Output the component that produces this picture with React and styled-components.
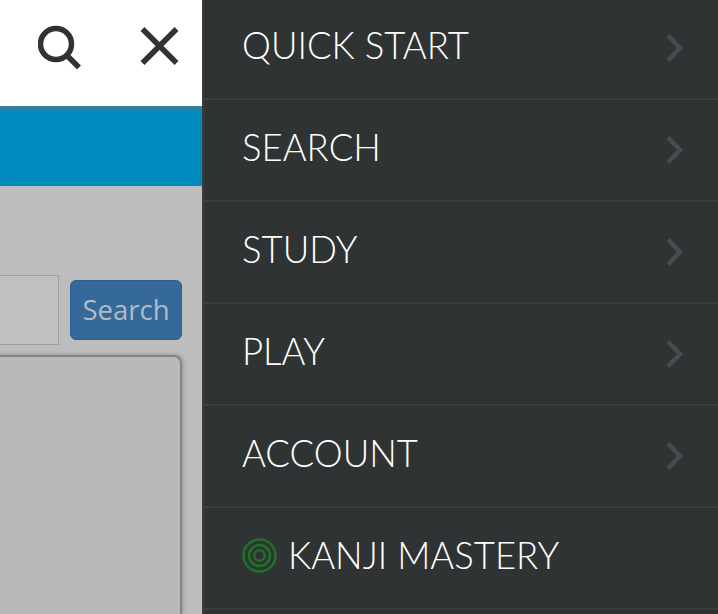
import React from "react";
import styled, { createGlobalStyle } from "styled-components";

const Global = createGlobalStyle`
  html, body { margin: 0; padding: 0; }
  body { width: 718px; height: 614px; overflow: hidden; background: #bdbdbd; }
`;

const MENU = ["QUICK START", "SEARCH", "STUDY", "PLAY", "ACCOUNT"];

const Page = styled.div`
  display: flex;
  width: 718px;
  height: 614px;
  overflow: hidden;
`;

const Side = styled.div`
  width: 202px;
  flex: none;
  display: flex;
  flex-direction: column;
  overflow: hidden;
`;

const TopBar = styled.div`
  height: 106px;
  background: #fff;
  display: flex;
  align-items: flex-start;
  padding: 25px 22px 0 38px;
  box-sizing: border-box;
  justify-content: space-between;
`;

const IconButton = styled.div`
  display: flex;
  line-height: 0;
`;

const BlueBand = styled.div`
  height: 80px;
  background: #008cc1;
  box-shadow: inset 0 5px 4px -2px rgba(90, 120, 130, 0.8);
`;

const Content = styled.div`
  flex: 1;
  background: #bdbdbd;
  padding-top: 89px;
  display: flex;
  flex-direction: column;
`;

const SearchRow = styled.div`
  display: flex;
  align-items: center;
  height: 70px;
`;

const SearchInput = styled.div`
  width: 60px;
  height: 70px;
  box-sizing: border-box;
  margin-left: -1px;
  background: #c0c0c0;
  border: 1px solid #a0a0a0;
`;

const SearchButton = styled.div`
  margin-left: 11px;
  width: 112px;
  height: 60px;
  box-sizing: border-box;
  background: #34699a;
  border: 1px solid #2c6292;
  border-radius: 6px;
  color: #aebcc8;
  font: 400 27.5px/58px "Open Sans", sans-serif;
  text-align: center;
`;

const Card = styled.div`
  margin: 10px 20px 0 -10px;
  flex: 1;
  background: #b9b9b9;
  border: 2px solid #858585;
  border-left: 0;
  border-bottom: 0;
  border-radius: 0 8px 0 0;
  box-shadow: 1px 0 4px rgba(0, 0, 0, 0.22);
`;

const Drawer = styled.nav`
  flex: 1;
  background: #2f3334;
  display: flex;
  flex-direction: column;
  box-shadow: inset 3px 0 3px -2px rgba(255, 255, 255, 0.1);
`;

const MenuRow = styled.div`
  height: 102px;
  flex: none;
  box-sizing: border-box;
  padding: 0 35px 6px 40px;
  display: flex;
  align-items: center;
  gap: 11px;
  border-bottom: 2px solid #3a3e40;
  color: #fff;
  font: 300 36.5px/1 Lato, sans-serif;

  &:first-child {
    height: 100px;
    padding-bottom: 8px;
  }
`;

const Label = styled.span`
  flex: 1;
`;

const ChevronIcon = styled.svg`
  margin-top: 6px;
`;

const Chevron = () => (
  <ChevronIcon width="18" height="30" viewBox="0 0 18 30" fill="none" stroke="#484c4f" strokeWidth="4.5">
    <path d="M3 2.5 L15 15 L3 27.5" />
  </ChevronIcon>
);

const Rings = () => (
  <svg width="35" height="35" viewBox="0 0 35 35" fill="none" stroke="#217029" strokeWidth="2.6">
    <circle cx="17.5" cy="17.5" r="16" />
    <circle cx="17.5" cy="17.5" r="10.5" />
    <circle cx="17.5" cy="17.5" r="5.2" />
  </svg>
);

export default function App() {
  return (
    <Page>
      <Global />
      <Side>
        <TopBar>
          <IconButton>
            <svg width="44" height="44" viewBox="0 0 44 44" fill="none" stroke="#2f3334" strokeWidth="5.5">
              <circle cx="18" cy="19" r="15.5" />
              <path d="M28.5 30 L41 42.5" />
            </svg>
          </IconButton>
          <IconButton>
            <svg width="40" height="42" viewBox="0 0 40 42" fill="none" stroke="#2f3334" strokeWidth="5.5">
              <path d="M2.5 4 L36.5 38 M36.5 4 L2.5 38" />
            </svg>
          </IconButton>
        </TopBar>
        <BlueBand />
        <Content>
          <SearchRow>
            <SearchInput />
            <SearchButton>Search</SearchButton>
          </SearchRow>
          <Card />
        </Content>
      </Side>
      <Drawer>
        {MENU.map((item) => (
          <MenuRow key={item}>
            <Label>{item}</Label>
            <Chevron />
          </MenuRow>
        ))}
        <MenuRow>
          <Rings />
          <Label>KANJI MASTERY</Label>
        </MenuRow>
      </Drawer>
    </Page>
  );
}
